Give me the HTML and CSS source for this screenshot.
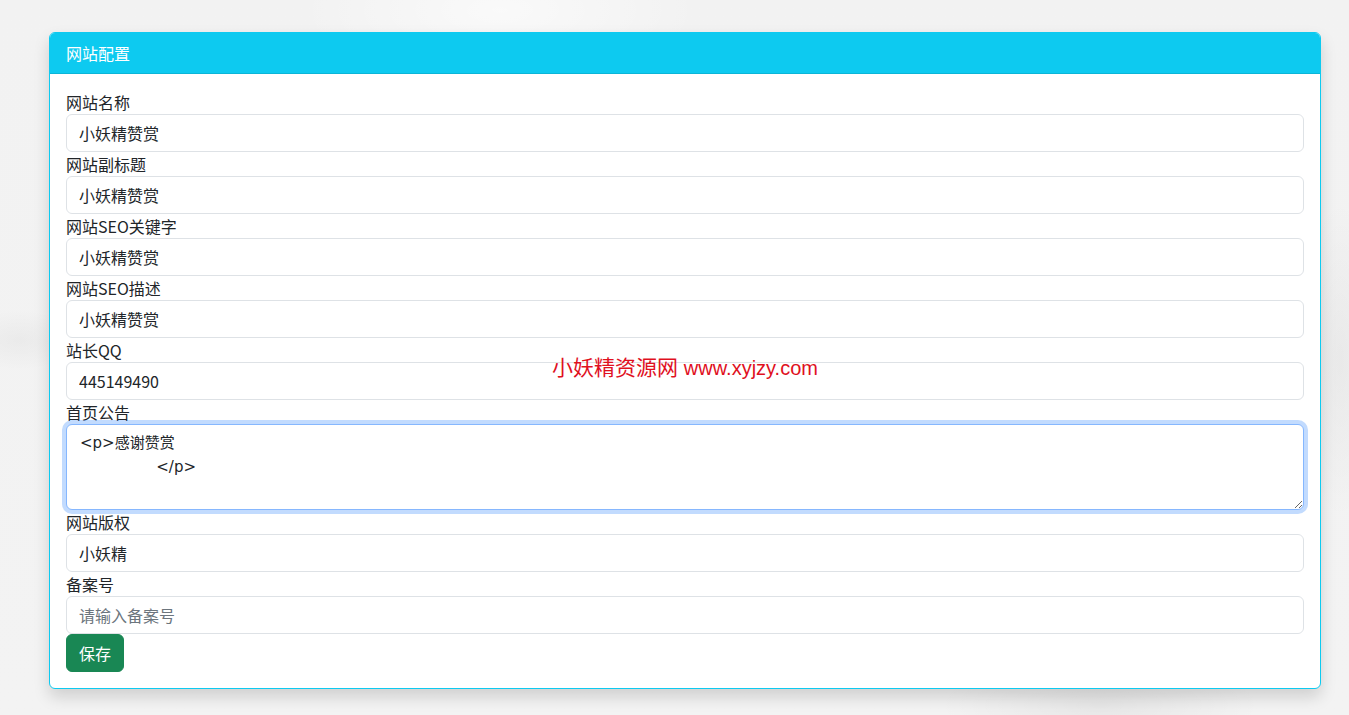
FILE: index.html
```html
<!DOCTYPE html>
<html lang="zh-CN">
<head>
<meta charset="utf-8">
<title>网站配置</title>
<link rel="stylesheet" href="styles.css">
</head>
<body>
<div class="page">
  <div class="card">
    <div class="card-header">网站配置</div>
    <form class="card-body">
      <label class="form-label">网站名称</label>
      <input class="form-control" type="text" value="小妖精赞赏">
      <label class="form-label">网站副标题</label>
      <input class="form-control" type="text" value="小妖精赞赏">
      <label class="form-label">网站SEO关键字</label>
      <input class="form-control" type="text" value="小妖精赞赏">
      <label class="form-label">网站SEO描述</label>
      <input class="form-control" type="text" value="小妖精赞赏">
      <label class="form-label">站长QQ</label>
      <input class="form-control" type="text" value="445149490">
      <label class="form-label">首页公告</label>
      <textarea class="form-control textarea focused" rows="3">&lt;p&gt;感谢赞赏
                &lt;/p&gt;</textarea>
      <label class="form-label">网站版权</label>
      <input class="form-control" type="text" value="小妖精">
      <label class="form-label">备案号</label>
      <input class="form-control" type="text" placeholder="请输入备案号">
      <div class="actions"><button type="button" class="btn-save">保存</button></div>
    </form>
  </div>
  <div class="watermark">小妖精资源网 <span class="wm-url">www.xyjzy.com</span></div>
</div>
</body>
</html>
```

FILE: styles.css
```css
* { box-sizing: border-box; }
html, body { margin: 0; height: 100%; }
body {
  font-family: "Noto Sans CJK SC", "Noto Sans", sans-serif;
  font-size: 16px;
  line-height: 1.5;
  color: #212529;
  background-color: #f1f1f1;
  background-image:
    radial-gradient(ellipse 60px 30px at 20px 340px, rgba(0,0,0,0.035), transparent),
    radial-gradient(ellipse 160px 50px at 1100px 705px, rgba(0,0,0,0.05), transparent),
    radial-gradient(ellipse 200px 80px at 500px 10px, rgba(255,255,255,0.6), transparent),
    radial-gradient(ellipse 40px 160px at 1340px 360px, rgba(0,0,0,0.04), transparent),
    linear-gradient(180deg, #f2f2f2, #f3f3f3);
  overflow: hidden;
}
.page {
  position: relative;
  padding: 32px 28px 0 49px;
}
.card {
  background: #fff;
  border: 1px solid #0dcaf0;
  border-radius: 6px;
  box-shadow: 0 8px 16px rgba(0,0,0,0.15);
  overflow: hidden;
}
.card-header {
  background: #0dcaf0;
  color: #fff;
  height: 41px;
  padding: 8px 16px;
  line-height: 24px;
  border-bottom: 1px solid rgba(0,0,0,0.1);
  font-size: 16px;
}
.card-body {
  display: flex;
  flex-direction: column;
  padding: 16px;
  margin: 0;
}
.form-label {
  display: block;
  line-height: 24px;
  height: 24px;
  font-size: 16px;
}
.form-control {
  display: block;
  width: 100%;
  height: 38px;
  padding: 6px 12px;
  font-family: "Noto Sans CJK SC", "Noto Sans", sans-serif;
  font-size: 16px;
  line-height: 24px;
  color: #212529;
  background: #fff;
  border: 1px solid #dee2e6;
  border-radius: 6px;
  outline: none;
}
.form-control::placeholder { color: #6c757d; opacity: 1; }
.textarea {
  height: 86px;
  resize: vertical;
  font-family: "DejaVu Sans", "Noto Sans CJK SC", sans-serif;
  font-size: 15px;
  line-height: 24px;
  padding: 6px 13px;
}
.focused {
  border-color: #86b7fe;
  box-shadow: 0 0 0 4px rgba(13,110,253,0.25);
}
.actions { display: flex; }
.btn-save {
  height: 38px;
  width: 58px;
  padding: 6px 12px;
  font-family: "Noto Sans CJK SC", "Noto Sans", sans-serif;
  font-size: 16px;
  line-height: 24px;
  color: #fff;
  background: #198754;
  border: 1px solid #198754;
  border-radius: 6px;
}
.watermark {
  position: absolute;
  left: 552px;
  top: 354px;
  color: #e0101e;
  font-family: "Liberation Sans", "Noto Sans CJK SC", sans-serif;
  font-size: 21px;
  line-height: 28px;
  white-space: nowrap;
}
.wm-url { font-size: 20px; }
```
